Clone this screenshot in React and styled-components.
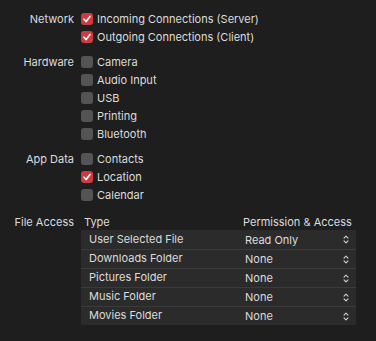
import React from 'react';
import styled, { createGlobalStyle } from 'styled-components';

const GlobalStyle = createGlobalStyle`
    html, body {
        margin: 0;
        padding: 0;
        background: #1e1e1e;
    }
    body {
        font-family: Inter, 'Liberation Sans', Arial, sans-serif;
        font-size: 11px;
        color: #dcdcdc;
    }
`;

const Page = styled.div`
    width: 376px;
    height: 341px;
    padding-top: 10px;
    box-sizing: border-box;
    display: flex;
    flex-direction: column;
    gap: 7px;
`;

const Section = styled.div`
    display: grid;
    grid-template-columns: 74px 1fr;
    column-gap: 7px;
    align-items: start;
`;

const Label = styled.div`
    text-align: right;
    line-height: 18px;
    height: 18px;
    white-space: nowrap;
`;

const Options = styled.div`
    display: flex;
    flex-direction: column;
`;

const Option = styled.label`
    display: flex;
    align-items: center;
    gap: 4px;
    height: 18px;
`;

const Box = styled.span`
    width: 12px;
    height: 12px;
    border-radius: 3px;
    box-sizing: border-box;
    background: ${props => (props.checked ? '#cf3a40' : '#545454')};
    display: flex;
    align-items: center;
    justify-content: center;
`;

const Check = () => (
    <svg width="10" height="10" viewBox="0 0 10 10">
        <path d="M2 5.2 L4.1 7.5 L8 2.4" fill="none" stroke="#fff" strokeWidth="1.7" strokeLinecap="round" strokeLinejoin="round" />
    </svg>
);

const FileSection = styled(Section)`
    margin-top: 2px;
`;

const Table = styled.div`
    width: 275px;
    display: flex;
    flex-direction: column;
`;

const HeaderRow = styled.div`
    display: grid;
    grid-template-columns: 160px 1fr;
    height: 17px;
    line-height: 18px;
`;

const HeaderCell = styled.div`
    padding-left: ${props => props.pad}px;
    white-space: nowrap;
`;

const Row = styled.div`
    display: grid;
    grid-template-columns: 160px 1fr;
    height: 19px;
    background: #2b2b2b;
    border-top: ${props => (props.first ? 'none' : '1px solid #3b3b3b')};
    box-sizing: border-box;
    align-items: center;
`;

const TypeCell = styled.div`
    padding-left: 8px;
    position: relative;
    top: -1px;
`;

const Select = styled.div`
    display: flex;
    align-items: center;
    justify-content: space-between;
    padding-left: 4px;
    padding-right: 7px;
`;

const Chevrons = () => (
    <svg width="6" height="9" viewBox="0 0 6 9">
        <path d="M1 3.2 L3 1.2 L5 3.2 M1 5.8 L3 7.8 L5 5.8" fill="none" stroke="#d0d0d0" strokeWidth="1.1" strokeLinecap="round" strokeLinejoin="round" />
    </svg>
);

const groups = [
    {
        label: 'Network',
        items: [
            { name: 'Incoming Connections (Server)', checked: true },
            { name: 'Outgoing Connections (Client)', checked: true }
        ]
    },
    {
        label: 'Hardware',
        items: [
            { name: 'Camera' },
            { name: 'Audio Input' },
            { name: 'USB' },
            { name: 'Printing' },
            { name: 'Bluetooth' }
        ]
    },
    {
        label: 'App Data',
        items: [
            { name: 'Contacts' },
            { name: 'Location', checked: true },
            { name: 'Calendar' }
        ]
    }
];

const files = [
    { type: 'User Selected File', access: 'Read Only' },
    { type: 'Downloads Folder', access: 'None' },
    { type: 'Pictures Folder', access: 'None' },
    { type: 'Music Folder', access: 'None' },
    { type: 'Movies Folder', access: 'None' }
];

export default function App() {
    return (
        <Page>
            <GlobalStyle />
            {groups.map(group => (
                <Section key={group.label}>
                    <Label>{group.label}</Label>
                    <Options>
                        {group.items.map(item => (
                            <Option key={item.name}>
                                <Box checked={item.checked}>{item.checked && <Check />}</Box>
                                {item.name}
                            </Option>
                        ))}
                    </Options>
                </Section>
            ))}
            <FileSection>
                <Label>File Access</Label>
                <Table>
                    <HeaderRow>
                        <HeaderCell pad={3}>Type</HeaderCell>
                        <HeaderCell pad={2}>Permission &amp; Access</HeaderCell>
                    </HeaderRow>
                    {files.map((file, i) => (
                        <Row key={file.type} first={i === 0}>
                            <TypeCell>{file.type}</TypeCell>
                            <Select>
                                {file.access}
                                <Chevrons />
                            </Select>
                        </Row>
                    ))}
                </Table>
            </FileSection>
        </Page>
    );
}
